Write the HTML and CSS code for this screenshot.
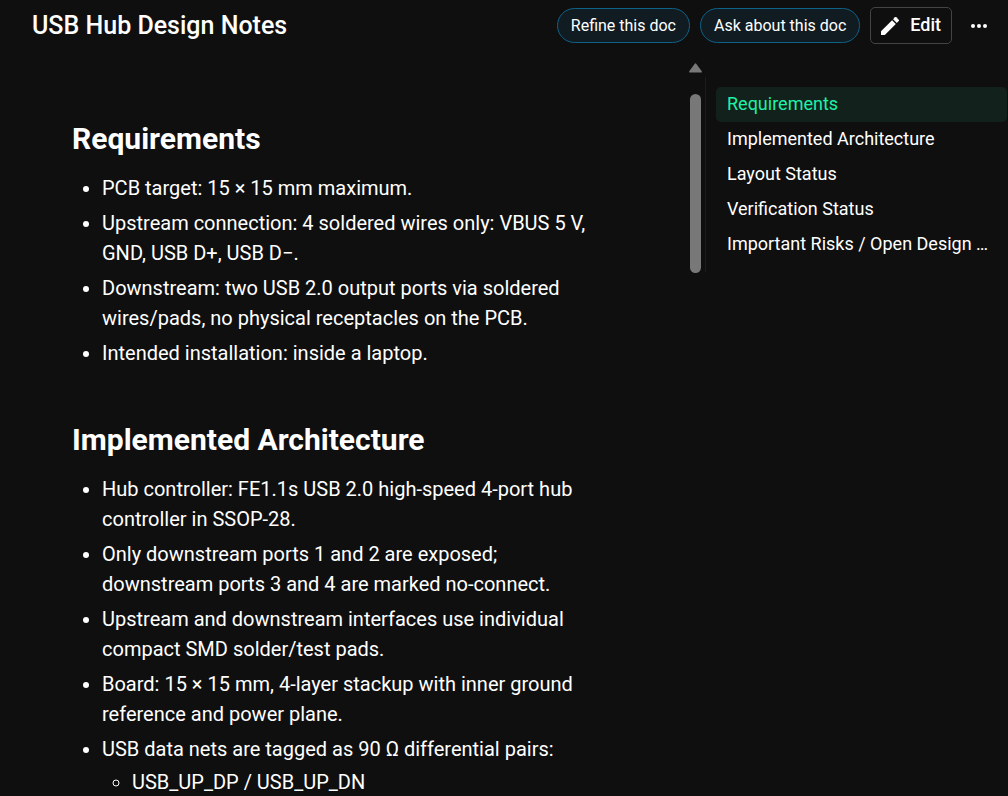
FILE: index.html
```
<!DOCTYPE html>
<html lang="en">

<head>
    <meta charset="UTF-8">
    <meta name="viewport" content="width=device-width, initial-scale=1.0">
    <title>USB Hub Design Notes</title>
    <link rel="stylesheet" href="styles.css">
</head>

<body>

    <header class="topbar">
        <h1 class="doc-title">USB Hub Design Notes</h1>
        <div class="actions">
            <button type="button" class="pill">Refine this doc</button>
            <button type="button" class="pill">Ask about this doc</button>
            <button type="button" class="edit">
                <svg width="18" height="18" viewBox="0 0 18 18" fill="currentColor" aria-hidden="true">
                    <path d="M0 14.2V18h3.8L14.8 6.9 11.1 3.2z"/>
                    <path d="M17.7 4.1a1 1 0 0 0 0-1.4L15.3.3a1 1 0 0 0-1.4 0L12.1 2.2l3.7 3.7z"/>
                </svg>
                <span>Edit</span>
            </button>
            <button type="button" class="more" aria-label="More options">
                <svg width="18" height="6" viewBox="0 0 18 6" fill="currentColor" aria-hidden="true">
                    <circle cx="3" cy="3" r="2"/>
                    <circle cx="9" cy="3" r="2"/>
                    <circle cx="15" cy="3" r="2"/>
                </svg>
            </button>
        </div>
    </header>

    <div class="layout">
        <main class="doc">
            <h2 id="requirements">Requirements</h2>
            <ul>
                <li>PCB target: 15 × 15 mm maximum.</li>
                <li>Upstream connection: 4 soldered wires only: VBUS 5 V, GND, USB D+, USB D−.</li>
                <li>Downstream: two USB 2.0 output ports via soldered wires/pads, no physical receptacles on the PCB.</li>
                <li>Intended installation: inside a laptop.</li>
            </ul>

            <h2 id="architecture">Implemented Architecture</h2>
            <ul>
                <li>Hub controller: FE1.1s USB 2.0 high-speed 4-port hub controller in SSOP-28.</li>
                <li>Only downstream ports 1 and 2 are exposed; downstream ports 3 and 4 are marked no-connect.</li>
                <li>Upstream and downstream interfaces use individual compact SMD solder/test pads.</li>
                <li>Board: 15 × 15 mm, 4-layer stackup with inner ground reference and power plane.</li>
                <li>USB data nets are tagged as 90 Ω differential pairs:
                    <ul>
                        <li>USB_UP_DP / USB_UP_DN</li>
                    </ul>
                </li>
            </ul>
        </main>

        <div class="scrollbar" aria-hidden="true">
            <svg class="scroll-arrow" width="13" height="10" viewBox="0 0 13 10">
                <path d="M5.6.9a1.1 1.1 0 0 1 1.8 0l5.2 7.2q.8 1.4-.8 1.4H1.200Q-.4 9.500.4 8.100z"/>
            </svg>
            <div class="scroll-thumb"></div>
        </div>

        <nav class="toc" aria-label="Contents">
            <a href="#requirements" class="active">Requirements</a>
            <a href="#architecture">Implemented Architecture</a>
            <a href="#layout">Layout Status</a>
            <a href="#verification">Verification Status</a>
            <a href="#risks">Important Risks / Open Design …</a>
        </nav>
    </div>

</body>

</html>
```
FILE: styles.css
```
* {
    box-sizing: border-box;
}

body {
    margin: 0;
    height: 100vh;
    overflow: hidden;
    display: flex;
    flex-direction: column;
    background: #0f0f0f;
    color: #fff;
    font-family: Roboto, sans-serif;
    font-size: 20px;
    line-height: 30px;
}

button {
    font-family: inherit;
    color: inherit;
    cursor: pointer;
}

.topbar {
    display: flex;
    align-items: center;
    justify-content: space-between;
    padding: 7px 13px 7px 32px;
}

.doc-title {
    margin: 0;
    font-size: 25px;
    font-weight: 500;
}

.actions {
    display: flex;
    align-items: center;
    gap: 10px;
}

.pill {
    height: 35px;
    padding: 0 13px;
    border: 1px solid #0e6187;
    border-radius: 18px;
    background: #101c22;
    font-size: 16px;
}

.edit {
    display: flex;
    align-items: center;
    gap: 11px;
    height: 37px;
    padding: 0 10px;
    border: 1px solid #444;
    border-radius: 5px;
    background: none;
    font-size: 18px;
    font-weight: 500;
}

.edit span {
    padding-bottom: 2px;
}

.more {
    display: flex;
    align-items: center;
    justify-content: center;
    width: 33px;
    height: 34px;
    padding: 0;
    border: none;
    background: none;
}

.layout {
    flex: 1;
    min-height: 0;
    display: flex;
    align-items: flex-start;
    padding-top: 10px;
}

.doc {
    flex: 1;
    height: 100%;
    overflow: hidden;
    padding: 59px 82px 0 72px;
}

.doc h2 {
    margin: 0 0 15px;
    font-size: 30px;
    line-height: 38px;
    font-weight: 700;
}

.doc ul {
    margin: 0;
    padding-left: 30px;
}

.doc ul + h2 {
    margin-top: 53px;
}

.doc li + li {
    margin-top: 5px;
}

.doc li ul {
    margin-top: 3px;
}

.scrollbar {
    display: flex;
    flex-direction: column;
    align-items: center;
    gap: 21px;
    width: 13px;
    padding-top: 2px;
}

.scroll-arrow {
    fill: #787878;
}

.scroll-thumb {
    width: 11px;
    height: 179px;
    border-radius: 6px;
    background: #787878;
}

.toc {
    flex: 0 0 303px;
    display: flex;
    flex-direction: column;
    margin: 16px 0 0 3px;
    padding: 10px 1px 10px 10px;
    border-left: 1px solid #1c1c1c;
}

.toc a {
    padding: 0 11px 2px;
    border-radius: 5px;
    overflow: hidden;
    color: #fff;
    font-size: 18px;
    line-height: 33px;
    white-space: nowrap;
    text-decoration: none;
    text-overflow: ellipsis;
}

.toc .active {
    background: #12211c;
    color: #1df2a8;
}
```
